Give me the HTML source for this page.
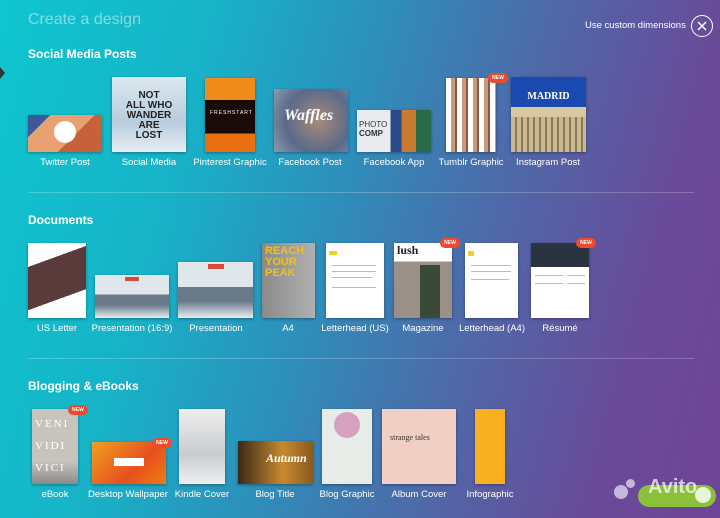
<!DOCTYPE html>
<html><head><meta charset="utf-8"><style>
*{margin:0;padding:0;box-sizing:border-box}
body{width:720px;height:518px;overflow:hidden;position:relative;font-family:"Liberation Sans",sans-serif;
background:linear-gradient(105deg,#0fc6cf 0%,#17b3c8 25%,#2d8fbb 45%,#4f68a8 65%,#6a4a99 85%,#6f4497 100%);}
.a{position:absolute}
.t{position:absolute;box-shadow:0 1px 3px rgba(0,0,0,.35);overflow:hidden}
.l{position:absolute;color:#fff;font-size:9.5px;transform:translateX(-50%);white-space:nowrap}
.h{position:absolute;color:#fff;font-weight:bold;font-size:12px;left:28px}
.new{position:absolute;background:#ef4a2c;color:#fff;font-size:5px;font-weight:bold;border-radius:6px;width:20px;height:10px;line-height:10px;text-align:center}
.hr{position:absolute;left:28px;width:666px;height:1px;background:rgba(255,255,255,.22)}
.doc{background:#fff}
.ln{position:absolute;height:1px;background:#bbb}
</style></head><body>
<div class="a" style="left:28px;top:11px;font-size:16px;color:rgba(200,240,244,.6);font-weight:300">Create a design</div>
<div class="a" style="left:585px;top:20px;font-size:9.5px;color:#fff">Use custom dimensions</div>
<div class="a" style="left:691px;top:15px;width:22px;height:22px;border:1.5px solid #fff;border-radius:50%"></div>
<svg class="a" style="left:696px;top:20px" width="12" height="12"><path d="M2 2L10 10M10 2L2 10" stroke="#fff" stroke-width="1.5"/></svg>
<div class="a" style="left:0;top:67px;width:0;height:0;border-top:6px solid transparent;border-bottom:6px solid transparent;border-left:5px solid #333"></div>

<div class="h" style="top:47px">Social Media Posts</div>
<div class="t" style="left:28px;top:115px;width:74px;height:37px;background:linear-gradient(135deg,#3a5a9a 0 20%,#e8a070 20% 60%,#c8603a 60%)"><div class="a" style="left:26px;top:6px;width:22px;height:22px;border-radius:50%;background:#fff"></div></div>
<div class="t" style="left:112px;top:77px;width:74px;height:75px;background:linear-gradient(180deg,#dce8f0,#b8ccdc 60%,#e8eef4)"><div class="a" style="left:12px;top:14px;width:50px;font:bold 10px/10px 'Liberation Sans Narrow','Liberation Sans',sans-serif;color:#222;text-align:center">NOT<br>ALL WHO<br>WANDER<br>ARE LOST</div></div>
<div class="t" style="left:205px;top:78px;width:50px;height:74px;background:linear-gradient(180deg,#f08a1a 0 30%,#1a0a08 30% 75%,#e87010 75%)"><div class="a" style="left:5px;top:32px;font-size:5px;color:#fff;letter-spacing:1px">FRESHSTART</div></div>
<div class="t" style="left:274px;top:89px;width:74px;height:63px;background:radial-gradient(circle at 60% 50%,#a88a7a,#5a6a8a 60%,#8a9aaa)"><div class="a" style="left:10px;top:18px;font:italic bold 16px 'Liberation Serif',serif;color:#fff">Waffles</div></div>
<div class="t" style="left:357px;top:110px;width:74px;height:42px;background:linear-gradient(90deg,#e8ecf0 0 45%,#2a4a8a 45% 60%,#c87a30 60% 80%,#2a6a4a 80%)"><div class="a" style="left:2px;top:10px;font-size:8px;line-height:9px;color:#333">PHOTO<br><b>COMP</b></div></div>
<div class="t" style="left:446px;top:78px;width:50px;height:74px;background:repeating-linear-gradient(90deg,#fff 0 5px,#c89a80 5px 9px,#8a5a40 9px 11px)"></div>
<div class="new" style="left:488px;top:73px">NEW</div>
<div class="t" style="left:511px;top:77px;width:75px;height:75px;background:linear-gradient(180deg,#1a4ab0 0 40%,#d8c8a0 40% 100%)"><div class="a" style="left:0;width:75px;top:14px;text-align:center;font:bold 10px 'Liberation Serif',serif;color:#fff">MADRID</div><div class="a" style="left:0;top:40px;width:75px;height:35px;background:repeating-linear-gradient(90deg,#c8b890 0 4px,#8a7a5a 4px 6px)"></div></div>
<div class="l" style="left:65px;top:157px">Twitter Post</div>
<div class="l" style="left:149px;top:157px">Social Media</div>
<div class="l" style="left:230px;top:157px">Pinterest Graphic</div>
<div class="l" style="left:310px;top:157px">Facebook Post</div>
<div class="l" style="left:394px;top:157px">Facebook App</div>
<div class="l" style="left:471px;top:157px">Tumblr Graphic</div>
<div class="l" style="left:548px;top:157px">Instagram Post</div>
<div class="hr" style="top:192px"></div>

<div class="h" style="top:213px">Documents</div>
<div class="t" style="left:28px;top:243px;width:58px;height:75px;background:linear-gradient(160deg,#fff 0 25%,#5a3a3a 25% 70%,#fff 70%)"></div>
<div class="t" style="left:95px;top:275px;width:74px;height:43px;background:linear-gradient(180deg,#dfe6ec 0 45%,#6a7a8a 45% 70%,#e8eef2)"><div class="a" style="left:30px;top:2px;width:14px;height:4px;background:#d84a3a"></div></div>
<div class="t" style="left:178px;top:262px;width:75px;height:56px;background:linear-gradient(180deg,#dfe6ec 0 45%,#6a7a8a 45% 70%,#e8eef2)"><div class="a" style="left:30px;top:2px;width:16px;height:5px;background:#d84a3a"></div></div>
<div class="t" style="left:262px;top:243px;width:53px;height:75px;background:linear-gradient(90deg,#8a8a8a,#b0b0b0)"><div class="a" style="left:3px;top:3px;font:bold 11px/11px 'Liberation Sans Narrow',sans-serif;color:#f0c020">REACH<br>YOUR<br>PEAK</div></div>
<div class="t doc" style="left:326px;top:243px;width:58px;height:75px"><div class="a" style="left:3px;top:8px;width:8px;height:4px;background:#f0d020"></div><div class="ln" style="left:6px;top:22px;width:44px"></div><div class="ln" style="left:6px;top:28px;width:44px"></div><div class="ln" style="left:6px;top:34px;width:40px"></div><div class="ln" style="left:6px;top:44px;width:44px"></div></div>
<div class="t" style="left:394px;top:243px;width:58px;height:75px;background:linear-gradient(180deg,#fff 0 25%,#9a9088 25%)"><div class="a" style="left:3px;top:0;font:bold 12px 'Liberation Serif',serif;color:#222">lush</div><div class="a" style="left:26px;top:22px;width:20px;height:53px;background:#3a4a38"></div></div>
<div class="new" style="left:440px;top:238px">NEW</div>
<div class="t doc" style="left:465px;top:243px;width:53px;height:75px"><div class="a" style="left:3px;top:8px;width:6px;height:5px;background:#f0d020"></div><div class="ln" style="left:6px;top:22px;width:40px"></div><div class="ln" style="left:6px;top:28px;width:40px"></div><div class="ln" style="left:6px;top:36px;width:38px"></div></div>
<div class="t doc" style="left:531px;top:243px;width:58px;height:75px"><div class="a" style="left:0;top:0;width:58px;height:24px;background:#2a3440"></div><div class="ln" style="left:4px;top:32px;width:28px"></div><div class="ln" style="left:4px;top:40px;width:28px"></div><div class="ln" style="left:36px;top:32px;width:18px"></div><div class="ln" style="left:36px;top:40px;width:18px"></div></div>
<div class="new" style="left:576px;top:238px">NEW</div>
<div class="l" style="left:57px;top:323px">US Letter</div>
<div class="l" style="left:132px;top:323px">Presentation (16:9)</div>
<div class="l" style="left:216px;top:323px">Presentation</div>
<div class="l" style="left:288px;top:323px">A4</div>
<div class="l" style="left:355px;top:323px">Letterhead (US)</div>
<div class="l" style="left:423px;top:323px">Magazine</div>
<div class="l" style="left:492px;top:323px">Letterhead (A4)</div>
<div class="l" style="left:560px;top:323px">Résumé</div>
<div class="hr" style="top:358px"></div>

<div class="h" style="top:379px">Blogging &amp; eBooks</div>
<div class="t" style="left:32px;top:409px;width:46px;height:75px;background:linear-gradient(180deg,#c8c4bc 0 70%,#8a8a8a)"><div class="a" style="left:3px;top:4px;font:11px/22px 'Liberation Serif',serif;color:#fff;letter-spacing:2px">VENI<br>VIDI<br>VICI</div></div>
<div class="new" style="left:68px;top:405px">NEW</div>
<div class="t" style="left:92px;top:442px;width:74px;height:42px;background:linear-gradient(135deg,#f0a020,#e85020 60%,#f07a10)"><div class="a" style="left:22px;top:16px;width:30px;height:8px;background:#fff"></div></div>
<div class="new" style="left:152px;top:438px">NEW</div>
<div class="t" style="left:179px;top:409px;width:46px;height:75px;background:linear-gradient(180deg,#eee,#c8ccd0 60%,#eee)"></div>
<div class="t" style="left:238px;top:441px;width:75px;height:43px;background:linear-gradient(90deg,#3a2a18,#c88a30 60%,#8a5a20)"><div class="a" style="left:28px;top:10px;font:italic bold 12px 'Liberation Serif',serif;color:#fff">Autumn</div></div>
<div class="t" style="left:322px;top:409px;width:50px;height:75px;background:#e8ece8"><div class="a" style="left:12px;top:3px;width:26px;height:26px;border-radius:50%;background:#d8a0c0"></div></div>
<div class="t" style="left:382px;top:409px;width:74px;height:75px;background:#f2cfc4"><div class="a" style="left:8px;top:24px;font:8px 'Liberation Serif',serif;color:#333">strange tales</div></div>
<div class="t" style="left:475px;top:409px;width:30px;height:75px;background:#f8b020"></div>
<div class="l" style="left:55px;top:489px">eBook</div>
<div class="l" style="left:128px;top:489px">Desktop Wallpaper</div>
<div class="l" style="left:202px;top:489px">Kindle Cover</div>
<div class="l" style="left:275px;top:489px">Blog Title</div>
<div class="l" style="left:347px;top:489px">Blog Graphic</div>
<div class="l" style="left:419px;top:489px">Album Cover</div>
<div class="l" style="left:490px;top:489px">Infographic</div>

<div class="a" style="left:638px;top:485px;width:78px;height:22px;border-radius:11px;background:#8ac03a"></div>
<div class="a" style="left:614px;top:485px;width:14px;height:14px;border-radius:50%;background:rgba(220,210,240,.8)"></div>
<div class="a" style="left:626px;top:479px;width:9px;height:9px;border-radius:50%;background:rgba(220,210,240,.8)"></div>
<div class="a" style="left:648px;top:476px;font:bold 20px 'Liberation Sans',sans-serif;color:rgba(255,255,255,.7)">Avito</div>
<div class="a" style="left:695px;top:487px;width:16px;height:16px;border-radius:50%;background:#fff;opacity:.8"></div>
</body></html>
